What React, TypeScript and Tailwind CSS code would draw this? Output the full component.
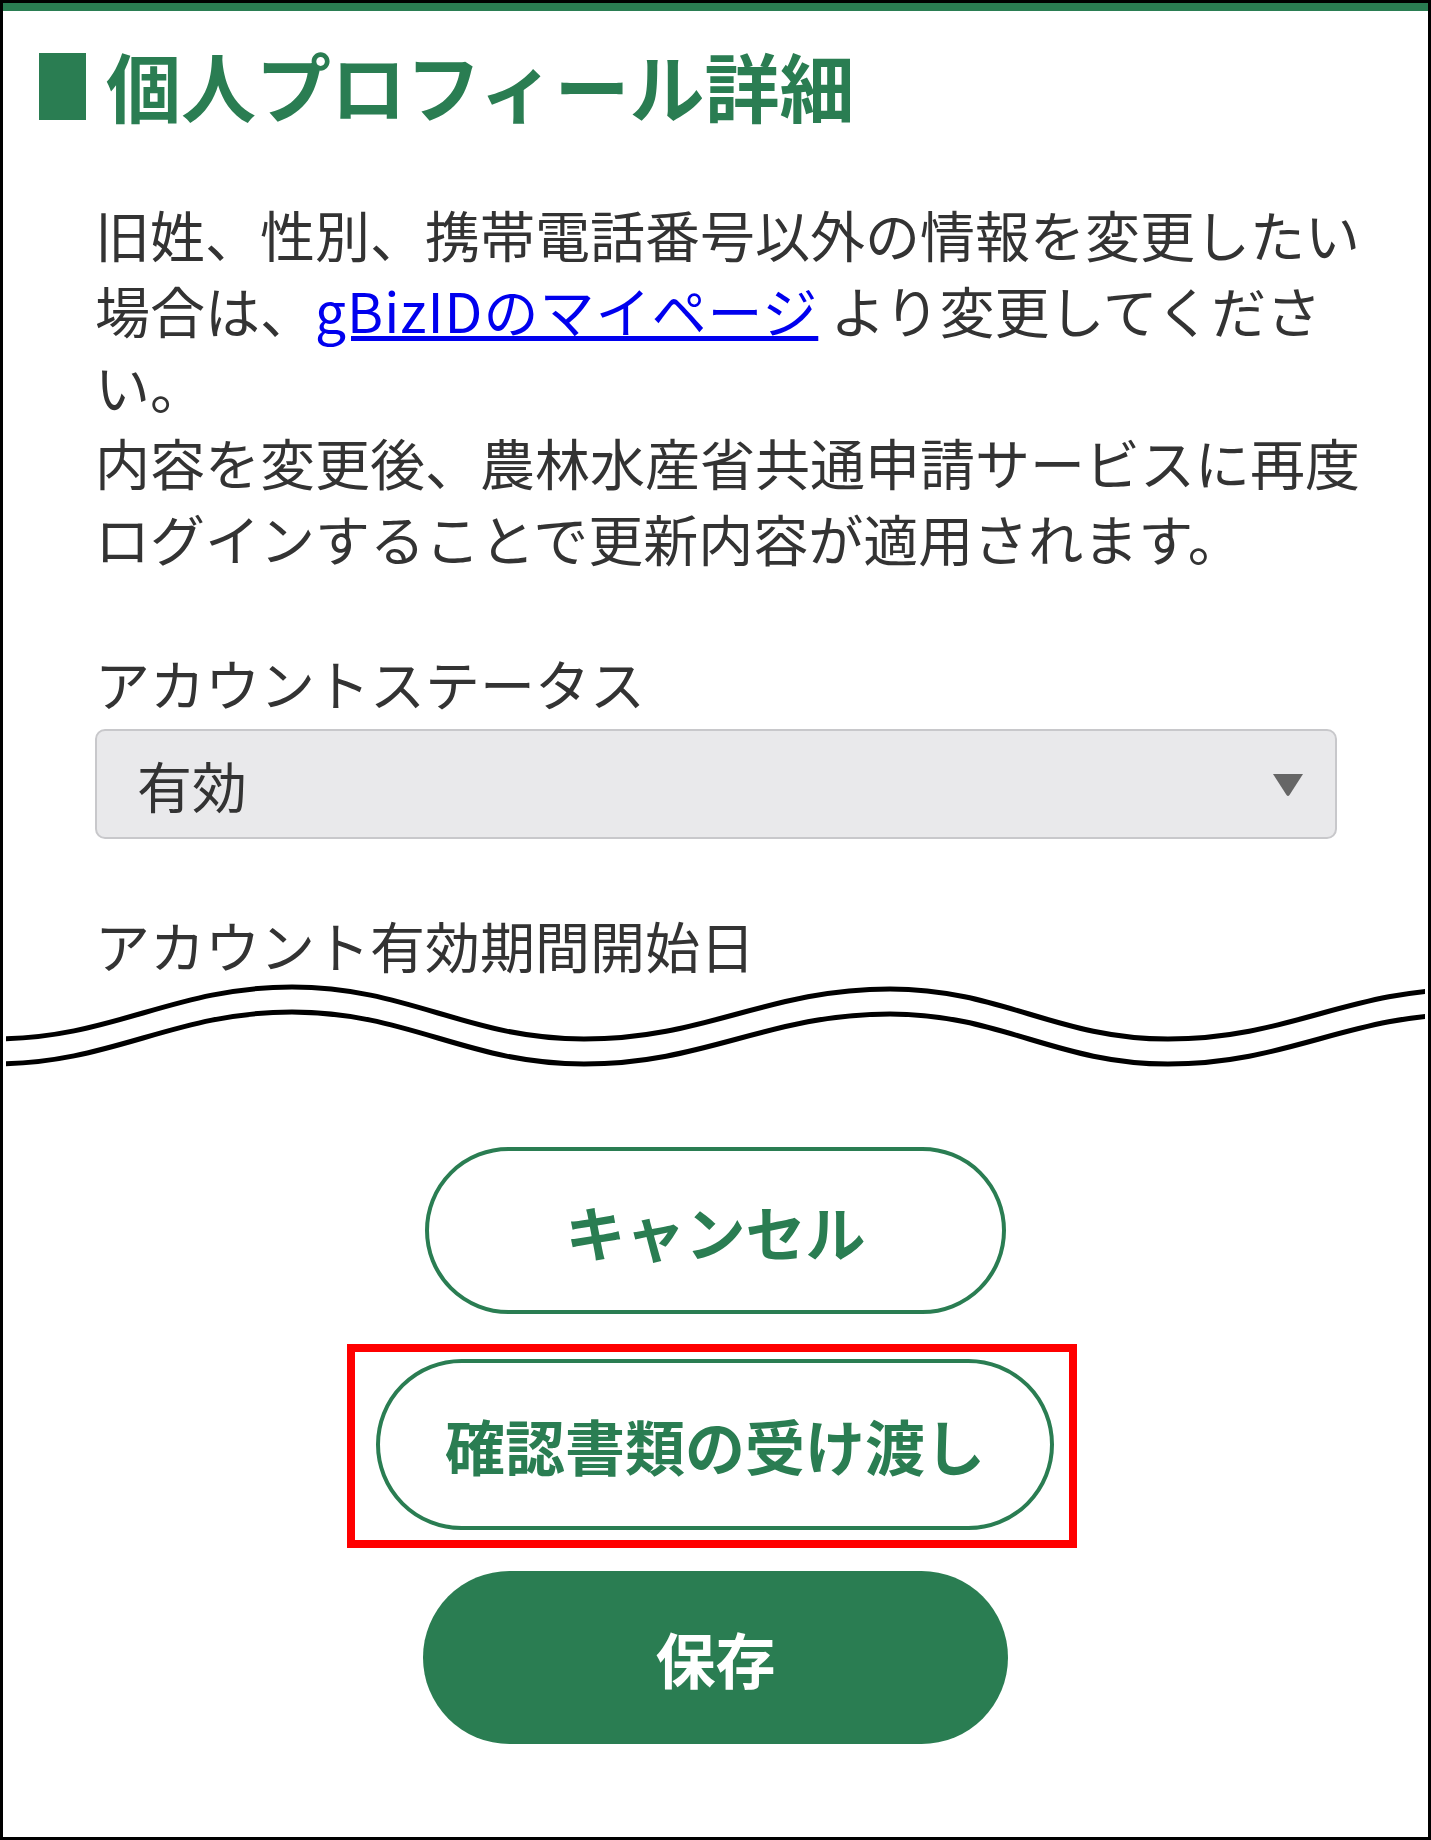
import React from 'react';

function Wave() {
  const top =
    'M -6 57 C 113 57, 173 5, 292 5 C 409 5, 467 57, 584 57 C 706 57, 768 7, 890 7 C 1001 7, 1057 57, 1168 57 C 1289 57, 1349 7, 1470 7';
  const bottom =
    'M -6 82 C 113 82, 173 30, 292 30 C 409 30, 467 82, 584 82 C 706 82, 768 32, 890 32 C 1001 32, 1057 82, 1168 82 C 1289 82, 1349 32, 1470 32';
  return (
    <div className="px-[3px]">
      <svg width="1419" height="90" viewBox="6 0 1419 90" className="block overflow-hidden">
        <path d={top} fill="none" stroke="#000" strokeWidth="5" />
        <path d={bottom} fill="none" stroke="#000" strokeWidth="5" />
      </svg>
    </div>
  );
}

export default function App() {
  return (
    <div className="w-[1431px] h-[1840px] border-[3px] border-black bg-white flex flex-col font-['Noto_Sans_CJK_JP',sans-serif] text-[#333]">
      <div className="h-[8px] bg-[#2a7d52]" />

      {/* heading */}
      <div className="mt-[42px] pl-[36px] flex items-center">
        <div className="w-[47px] h-[67px] bg-[#2a7d52]" />
        <h1 className="ml-[20px] -mt-[4px] text-[75px] leading-[67px] font-bold text-[#2a7d52]">個人プロフィール詳細</h1>
      </div>

      <div className="pl-[92px] flex flex-col">
        <p className="mt-[75px] w-[1272px] text-[55px] leading-[76px]">
          <span>旧姓、性別、携帯電話番号以外の情報を変更したい</span>
          <br />
          <span>場合は、</span>
          <a href="#" className="text-[#0000ee] underline tracking-[1px]">gBizIDのマイページ</a>
          <span> より変更してくださ</span>
          <br />
          <span>い。</span>
          <br />
          <span>内容を変更後、農林水産省共通申請サービスに再度</span>
          <br />
          <span>ログインすることで更新内容が適用されます。</span>
        </p>

        <label className="mt-[69px] text-[55px] leading-[76px]">アカウントステータス</label>
        <div className="mt-[9px] w-[1242px] h-[110px] rounded-[10px] border-2 border-[#c8c8cb] bg-[#e9e9eb] flex items-center justify-between pl-[40px] pr-[31px]">
          <span className="text-[55px] leading-none">有効</span>
          <svg width="32" height="25" viewBox="0 0 32 25">
            <path d="M1 2 H31 L17.5 23 Q16 25 14.5 23 Z" fill="#666" />
          </svg>
        </div>

        <label className="mt-[67px] text-[55px] leading-[76px]">アカウント有効期間開始日</label>
      </div>

      <Wave />

      {/* buttons */}
      <div className="mt-[75px] flex flex-col items-center">
        <button className="w-[581px] h-[167px] rounded-full border-4 border-[#2a7d52] bg-white text-[60px] font-bold text-[#2a7d52]">
          キャンセル
        </button>

        <div className="mt-[30px] mr-[7px] border-[8px] border-[#ff0000] pl-[21px] pr-[15px] pt-[7px] pb-[10px]">
          <button className="w-[678px] h-[171px] rounded-full border-4 border-[#2a7d52] bg-white text-[60px] font-bold text-[#2a7d52]">
            確認書類の受け渡し
          </button>
        </div>

        <button className="mt-[23px] w-[585px] h-[173px] rounded-full bg-[#2a7d52] text-[60px] font-bold text-white">
          保存
        </button>
      </div>
    </div>
  );
}
